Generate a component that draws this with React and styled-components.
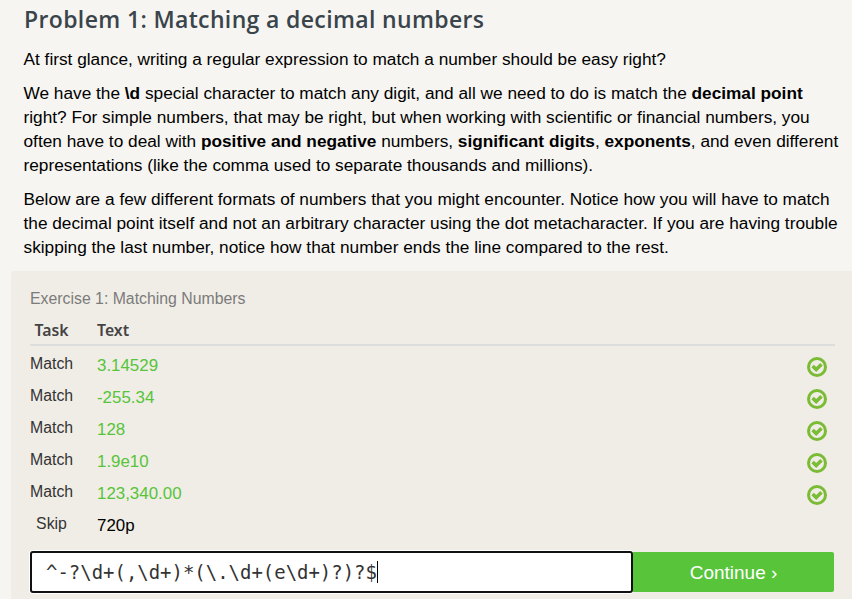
import React from 'react';
import styled, { createGlobalStyle } from 'styled-components';

const GlobalStyle = createGlobalStyle`
  * { box-sizing: border-box; }
  body { margin: 0; background: #f7f5f2; overflow: hidden; }
`;

const Page = styled.main`
  height: 599px;
  overflow: hidden;
  padding-top: 4px;
  color: #000;
  font: 17.25px/24px "Liberation Sans", Arial, sans-serif;
`;
const Title = styled.h1`
  margin: 0 0 13px 24px;
  font: 600 23px/30px "Open Sans", sans-serif;
  letter-spacing: 0.36px;
  color: #39444b;
  white-space: nowrap;
`;
const Paragraph = styled.p`
  margin: 0 0 10px 23.5px;
  white-space: nowrap;
`;
const Exercise = styled.section`
  margin: 12px 0 0 11px;
  height: 328px;
  padding: 16px 18px 0 19px;
  border-top-left-radius: 3px;
  background: #f0ede6;
`;
const ExerciseTitle = styled.h2`
  margin: 0;
  font: 400 15.84px/23px "Liberation Sans", Arial, sans-serif;
  color: #7b7b7b;
`;
const HeaderRow = styled.div`
  display: grid;
  grid-template-columns: 43px 1fr;
  column-gap: 24px;
  width: 805px;
  height: 36px;
  border-bottom: 2px solid #dddddb;
  font: 600 15.8px/40px "Noto Sans", sans-serif;
  color: #444;
`;
const TaskHeading = styled.span`
  text-align: center;
`;
const Row = styled.div`
  display: grid;
  grid-template-columns: 43px 1fr 20px;
  column-gap: 24px;
  width: 797px;
  height: 32px;
`;
const Task = styled.span`
  text-align: center;
  font-size: 15.84px;
  line-height: 36px;
  color: #333;
`;
const Sample = styled.span`
  font-size: 16.9px;
  line-height: 40px;
  color: ${({ $matched }) => ($matched ? '#57c43a' : '#000')};
`;
const CheckIcon = styled.svg`
  display: block;
  width: 20px;
  height: 20px;
  margin-top: 11px;
`;
const Form = styled.form`
  display: flex;
  width: 804px;
  height: 42px;
  margin-top: 13px;
`;
const Pattern = styled.div`
  display: flex;
  align-items: center;
  width: 603px;
  padding-left: 14px;
  border: 2px solid #111;
  border-radius: 3px;
  box-shadow: 0 0 0 1px #fff;
  background: #fff;
  color: #333;
  font: 18.97px/24px "DejaVu Sans Mono", monospace;
`;
const Caret = styled.span`
  width: 1px;
  height: 22px;
  margin-left: -0.4px;
  background: #000;
`;
const Continue = styled.button`
  position: relative;
  width: 201px;
  height: 40px;
  margin-top: 1px;
  border: 0;
  border-radius: 0 2px 2px 0;
  padding: 0;
  background: #57c43a;
  color: #fff;
  font: 19px/42px "Liberation Sans", Arial, sans-serif;
`;

const samples = ['3.14529', '-255.34', '128', '1.9e10', '123,340.00'];

const Check = () => (
  <CheckIcon viewBox="0 0 20 20">
    <circle cx="10" cy="10" r="8.5" fill="none" stroke="#7bbb36" strokeWidth="3" />
    <path d="M5.6 9l3.6 3.6 5.3-5.3" fill="none" stroke="#7bbb36" strokeWidth="3.5" />
  </CheckIcon>
);

export default function App() {
  return (
    <Page>
      <GlobalStyle />
      <Title>Problem 1: Matching a decimal numbers</Title>
      <Paragraph>At first glance, writing a regular expression to match a number should be easy right?</Paragraph>
      <Paragraph>
        We have the <b>\d</b> special character to match any digit, and all we need to do is match the <b>decimal point</b><br />
        right? For simple numbers, that may be right, but when working with scientific or financial numbers, you<br />
        often have to deal with <b>positive and negative</b> numbers, <b>significant digits</b>, <b>exponents</b>, and even different<br />
        representations (like the comma used to separate thousands and millions).
      </Paragraph>
      <Paragraph>
        Below are a few different formats of numbers that you might encounter. Notice how you will have to match<br />
        the decimal point itself and not an arbitrary character using the dot metacharacter. If you are having trouble<br />
        skipping the last number, notice how that number ends the line compared to the rest.
      </Paragraph>
      <Exercise>
        <ExerciseTitle>Exercise 1: Matching Numbers</ExerciseTitle>
        <HeaderRow><TaskHeading>Task</TaskHeading><span>Text</span></HeaderRow>
        {samples.map((text) => (
          <Row key={text}><Task>Match</Task><Sample $matched>{text}</Sample><Check /></Row>
        ))}
        <Row><Task>Skip</Task><Sample>720p</Sample></Row>
        <Form>
          <Pattern>{'^-?\\d+(,\\d+)*(\\.\\d+(e\\d+)?)?$'}<Caret /></Pattern>
          <Continue type="button">Continue ›</Continue>
        </Form>
      </Exercise>
    </Page>
  );
}
